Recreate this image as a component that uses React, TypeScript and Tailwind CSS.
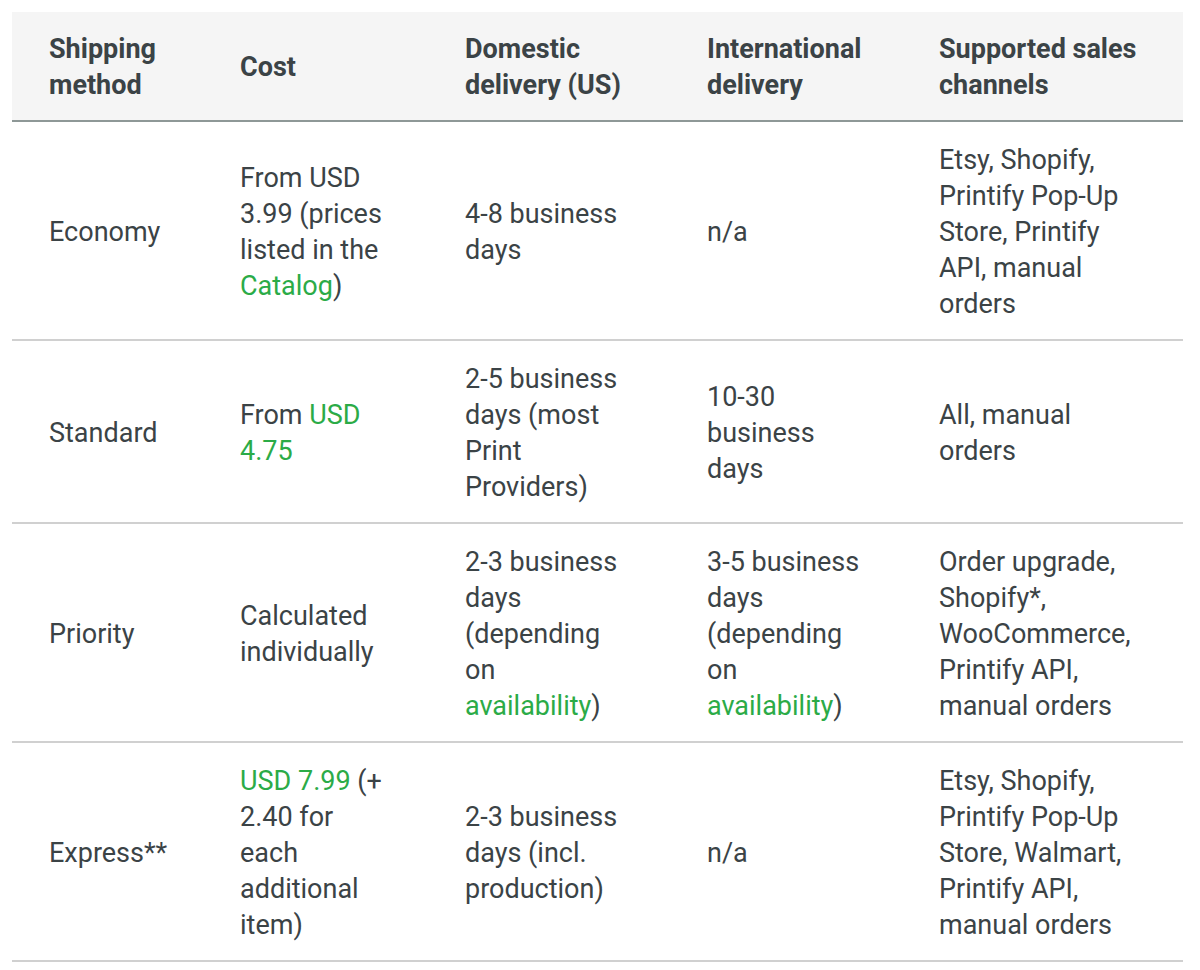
import React from "react";

const G = ({ children }: { children: React.ReactNode }) => (
  <span className="text-[#2bab47]">{children}</span>
);

const rows: React.ReactNode[][] = [
  [
    "Economy",
    <>From USD 3.99 (prices listed in the <G>Catalog</G>)</>,
    "4-8 business days",
    "n/a",
    "Etsy, Shopify, Printify Pop-Up Store, Printify API, manual orders",
  ],
  [
    "Standard",
    <>From <G>USD 4.75</G></>,
    "2-5 business days (most Print Providers)",
    "10-30 business days",
    "All, manual orders",
  ],
  [
    "Priority",
    "Calculated individually",
    <>2-3 business days (depending on <G>availability</G>)</>,
    <>3-5 business days (depending on <G>availability</G>)</>,
    "Order upgrade, Shopify*, WooCommerce, Printify API, manual orders",
  ],
  [
    "Express**",
    <><G>USD 7.99</G> (+ 2.40 for each additional item)</>,
    "2-3 business days (incl. production)",
    "n/a",
    "Etsy, Shopify, Printify Pop-Up Store, Walmart, Printify API, manual orders",
  ],
];

const headers = [
  "Shipping method",
  "Cost",
  "Domestic delivery (US)",
  "International delivery",
  "Supported sales channels",
];

const widths = ["w-[191px]", "w-[225px]", "w-[242px]", "w-[232px]", "w-[281px]"];
const pads = ["pr-[24px]", "pr-[37px]", "pr-[44px]", "pr-[35px]", "pr-[38px]"];

export default function App() {
  return (
    <div className="min-h-[970px] bg-white pt-[12px] pl-[12px]" style={{ fontFamily: "Roboto, 'Liberation Sans', sans-serif" }}>
      <table className="w-[1171px] table-fixed border-collapse text-[27px] leading-[36px] text-[#3b4346]">
        <colgroup>
          {widths.map((w, i) => (
            <col key={i} className={w} />
          ))}
        </colgroup>
        <thead>
          <tr className="bg-[#f5f5f5] border-b-2 border-[#8e9897]">
            {headers.map((h, i) => (
              <th key={i} className={`pl-[37px] ${pads[i]} pt-[19px] pb-[17px] text-left align-middle font-bold`}>
                {h}
              </th>
            ))}
          </tr>
        </thead>
        <tbody>
          {rows.map((r, ri) => (
            <tr key={ri} className="border-b-2 border-[#d0d0d0]">
              {r.map((c, ci) => (
                <td key={ci} className={`pl-[37px] ${pads[ci]} pt-[20px] pb-[17px] text-left align-middle`}>
                  {c}
                </td>
              ))}
            </tr>
          ))}
        </tbody>
      </table>
    </div>
  );
}
